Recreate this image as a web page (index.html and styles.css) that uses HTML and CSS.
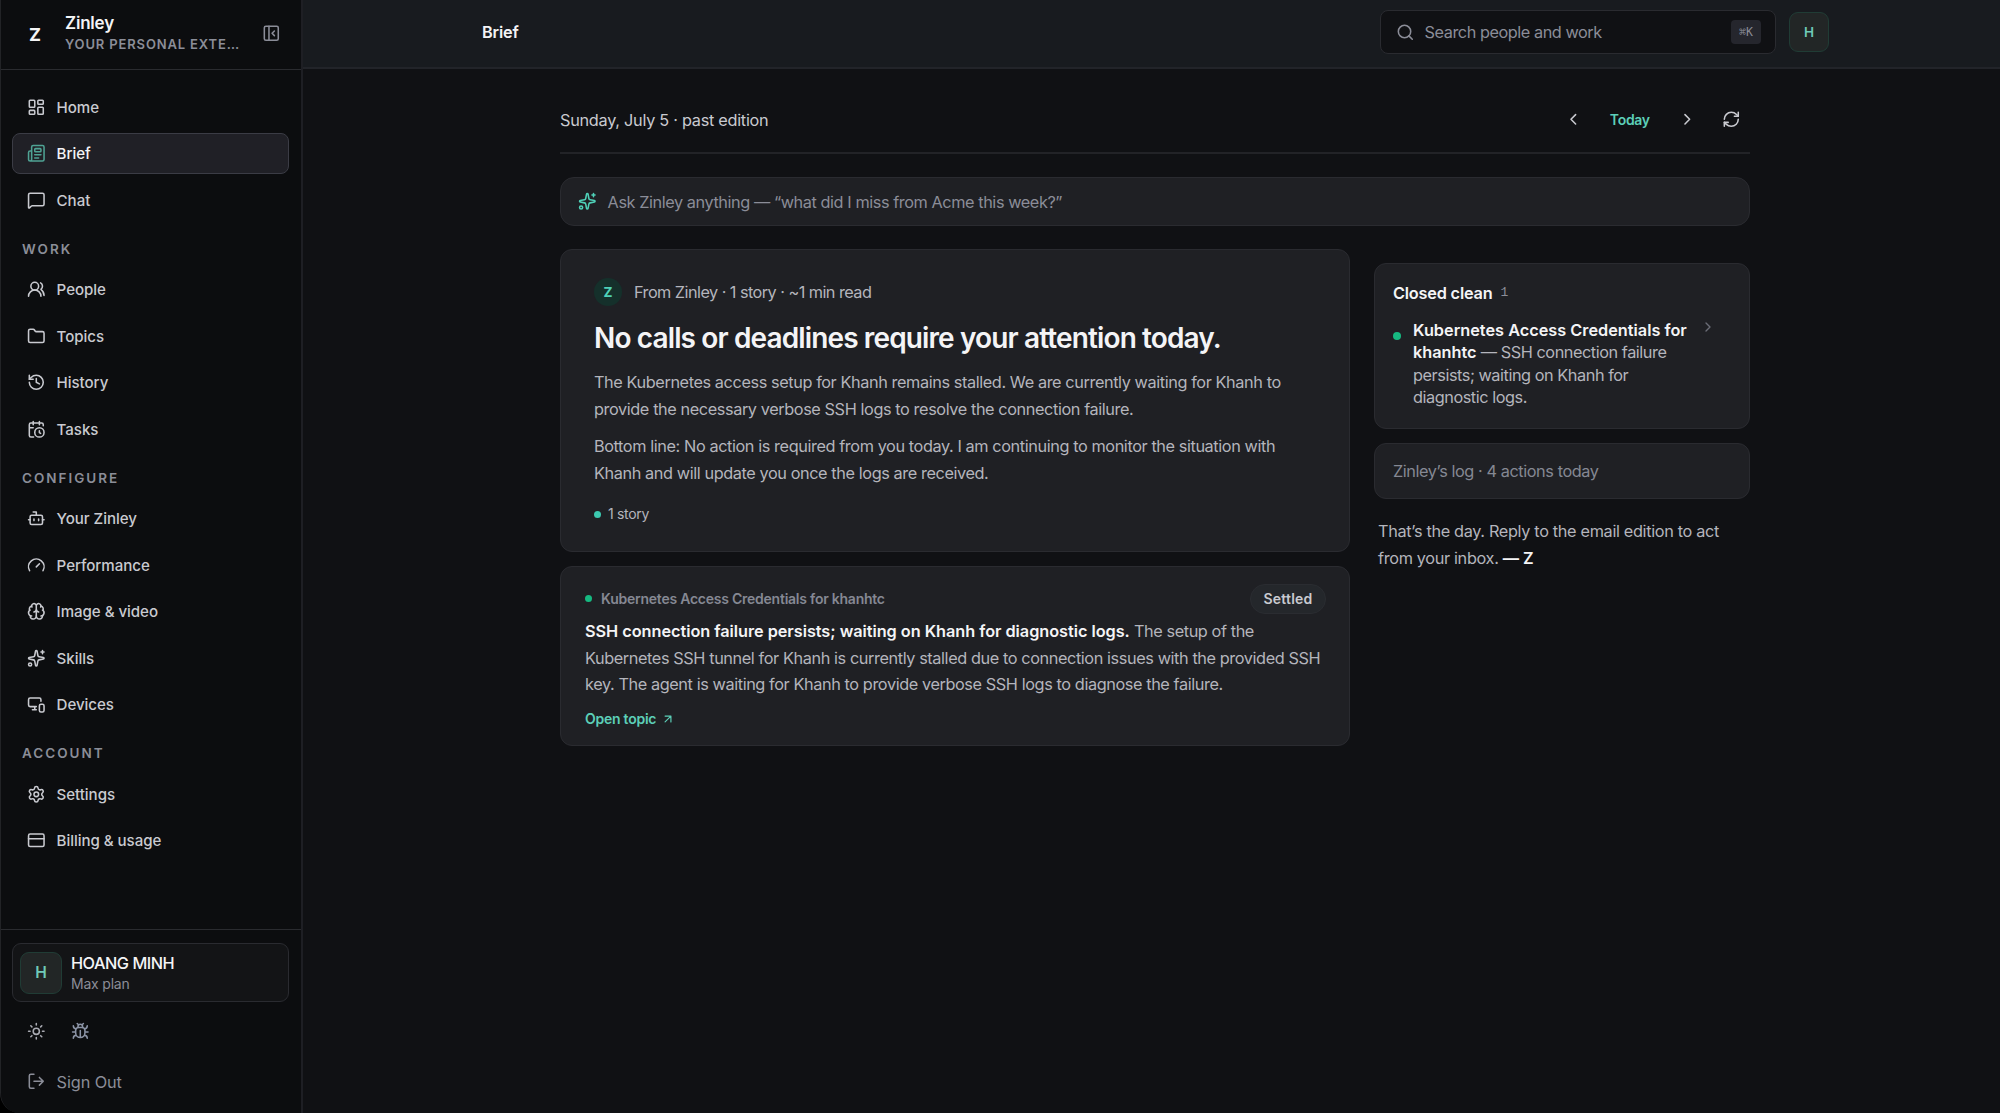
FILE: index.html
```html
<!DOCTYPE html>
<html lang="en">
<head>
  <meta charset="UTF-8">
  <meta name="viewport" content="width=device-width, initial-scale=1.0">
  <title>Brief - Zinley</title>
  <link rel="stylesheet" href="styles.css">
</head>
<body>
  <div class="app">
    <aside class="sidebar">
      <div class="brand">
        <span class="brand-logo">Z</span>
        <div class="brand-text">
          <div class="brand-name"><span>Zinley</span></div>
          <div class="brand-tagline">YOUR PERSONAL EXTE…</div>
        </div>
        <svg class="icon brand-toggle" viewBox="0 0 24 24"><rect x="3" y="3" width="18" height="18" rx="2"/><path d="M9 3v18M16 15l-3-3 3-3"/></svg>
      </div>

      <nav class="nav">
        <a class="nav-item">
          <svg class="icon" viewBox="0 0 24 24"><rect x="3" y="3" width="7" height="9" rx="1"/><rect x="14" y="3" width="7" height="5" rx="1"/><rect x="14" y="12" width="7" height="9" rx="1"/><rect x="3" y="16" width="7" height="5" rx="1"/></svg>
          <span>Home</span>
        </a>
        <a class="nav-item active">
          <svg class="icon" viewBox="0 0 24 24"><path d="M15 18h-5M18 14h-8M4 22h16a2 2 0 0 0 2-2V4a2 2 0 0 0-2-2H8a2 2 0 0 0-2 2v16a2 2 0 0 1-4 0v-9a2 2 0 0 1 2-2h2"/><rect x="10" y="6" width="8" height="4" rx="1"/></svg>
          <span>Brief</span>
        </a>
        <a class="nav-item">
          <svg class="icon" viewBox="0 0 24 24"><path d="M22 17a2 2 0 0 1-2 2H6.828a2 2 0 0 0-1.414.586l-2.202 2.202A.71.71 0 0 1 2 21.286V5a2 2 0 0 1 2-2h16a2 2 0 0 1 2 2z"/></svg>
          <span>Chat</span>
        </a>

        <div class="nav-label">WORK</div>
        <a class="nav-item">
          <svg class="icon" viewBox="0 0 24 24"><path d="M18 21a8 8 0 0 0-16 0"/><circle cx="10" cy="8" r="5"/><path d="M22 20c0-3.37-2-6.5-4-8a5 5 0 0 0-.45-8.3"/></svg>
          <span>People</span>
        </a>
        <a class="nav-item">
          <svg class="icon" viewBox="0 0 24 24"><path d="M20 20a2 2 0 0 0 2-2V8a2 2 0 0 0-2-2h-7.9a2 2 0 0 1-1.69-.9L9.6 3.9A2 2 0 0 0 7.93 3H4a2 2 0 0 0-2 2v13a2 2 0 0 0 2 2Z"/></svg>
          <span>Topics</span>
        </a>
        <a class="nav-item">
          <svg class="icon" viewBox="0 0 24 24"><path d="M3 12a9 9 0 1 0 9-9 9.75 9.75 0 0 0-6.74 2.74L3 8"/><path d="M3 3v5h5M12 7v5l4 2"/></svg>
          <span>History</span>
        </a>
        <a class="nav-item">
          <svg class="icon" viewBox="0 0 24 24"><path d="M16 14v2.2l1.6 1M16 2v4M21 7.5V6a2 2 0 0 0-2-2H5a2 2 0 0 0-2 2v14a2 2 0 0 0 2 2h3.5M3 10h5M8 2v4"/><circle cx="16" cy="16" r="6"/></svg>
          <span>Tasks</span>
        </a>

        <div class="nav-label">CONFIGURE</div>
        <a class="nav-item">
          <svg class="icon" viewBox="0 0 24 24"><path d="M12 8V4H8"/><rect x="4" y="8" width="16" height="12" rx="2"/><path d="M2 14h2M20 14h2M15 13v2M9 13v2"/></svg>
          <span>Your Zinley</span>
        </a>
        <a class="nav-item">
          <svg class="icon" viewBox="0 0 24 24"><path d="m12 14 4-4M3.34 19a10 10 0 1 1 17.32 0"/></svg>
          <span>Performance</span>
        </a>
        <a class="nav-item">
          <svg class="icon" viewBox="0 0 24 24"><path d="M12 18V5M15 13a4.17 4.17 0 0 1-3-4 4.17 4.17 0 0 1-3 4M17.598 6.5A3 3 0 1 0 12 5a3 3 0 1 0-5.598 1.5"/><path d="M17.997 5.125a4 4 0 0 1 2.526 5.77M18 18a4 4 0 0 0 2-7.464"/><path d="M19.967 17.483A4 4 0 1 1 12 18a4 4 0 1 1-7.967-.517M6 18a4 4 0 0 1-2-7.464M6.003 5.125a4 4 0 0 0-2.526 5.77"/></svg>
          <span>Image &amp; video</span>
        </a>
        <a class="nav-item">
          <svg class="icon" viewBox="0 0 24 24"><path d="M11.017 2.814a1 1 0 0 1 1.966 0l1.051 5.558a2 2 0 0 0 1.594 1.594l5.558 1.051a1 1 0 0 1 0 1.966l-5.558 1.051a2 2 0 0 0-1.594 1.594l-1.051 5.558a1 1 0 0 1-1.966 0l-1.051-5.558a2 2 0 0 0-1.594-1.594l-5.558-1.051a1 1 0 0 1 0-1.966l5.558-1.051a2 2 0 0 0 1.594-1.594z"/><path d="M20 2v4M22 4h-4"/><circle cx="4" cy="20" r="2"/></svg>
          <span>Skills</span>
        </a>
        <a class="nav-item">
          <svg class="icon" viewBox="0 0 24 24"><path d="M18 8V6a2 2 0 0 0-2-2H4a2 2 0 0 0-2 2v7a2 2 0 0 0 2 2h8M10 19v-3.96 3.15M7 19h5"/><rect x="16" y="12" width="6" height="10" rx="2"/></svg>
          <span>Devices</span>
        </a>

        <div class="nav-label">ACCOUNT</div>
        <a class="nav-item">
          <svg class="icon" viewBox="0 0 24 24"><path d="M9.671 4.136a2.34 2.34 0 0 1 4.659 0 2.34 2.34 0 0 0 3.319 1.915 2.34 2.34 0 0 1 2.33 4.033 2.34 2.34 0 0 0 0 3.831 2.34 2.34 0 0 1-2.33 4.033 2.34 2.34 0 0 0-3.319 1.915 2.34 2.34 0 0 1-4.659 0 2.34 2.34 0 0 0-3.32-1.915 2.34 2.34 0 0 1-2.33-4.033 2.34 2.34 0 0 0 0-3.831A2.34 2.34 0 0 1 6.35 6.051a2.34 2.34 0 0 0 3.319-1.915"/><circle cx="12" cy="12" r="3"/></svg>
          <span>Settings</span>
        </a>
        <a class="nav-item">
          <svg class="icon" viewBox="0 0 24 24"><rect x="2" y="4" width="20" height="16" rx="2"/><path d="M2 10h20"/></svg>
          <span>Billing &amp; usage</span>
        </a>
      </nav>

      <div class="sidebar-footer">
        <div class="user-card">
          <span class="user-avatar">H</span>
          <div>
            <div class="user-name"><span>HOANG MINH</span></div>
            <div class="user-plan"><span>Max plan</span></div>
          </div>
        </div>
        <div class="tools">
          <svg class="icon" viewBox="0 0 24 24"><circle cx="12" cy="12" r="4"/><path d="M12 2v2M12 20v2M4.93 4.93l1.41 1.41M17.66 17.66l1.41 1.41M2 12h2M20 12h2M6.34 17.66l-1.41 1.41M19.07 4.93l-1.41 1.41"/></svg>
          <svg class="icon bug" viewBox="0 0 24 24"><path d="M12 20v-9M14 7a4 4 0 0 1 4 4v3a6 6 0 0 1-12 0v-3a4 4 0 0 1 4-4zM14.12 3.88 16 2M21 21a4 4 0 0 0-3.81-4M21 5a4 4 0 0 1-3.55 3.97M22 13h-4M3 21a4 4 0 0 1 3.81-4M3 5a4 4 0 0 0 3.55 3.97M6 13H2M8 2l1.88 1.88M9 7.13V6a3 3 0 1 1 6 0v1.13"/></svg>
        </div>
        <a class="sign-out">
          <svg class="icon" viewBox="0 0 24 24"><path d="m16 17 5-5-5-5M21 12H9M9 21H5a2 2 0 0 1-2-2V5a2 2 0 0 1 2-2h4"/></svg>
          <span>Sign Out</span>
        </a>
      </div>
    </aside>

    <main class="main">
      <header class="topbar">
        <div class="page-title"><span>Brief</span></div>
        <div class="search">
          <svg class="icon" viewBox="0 0 24 24"><circle cx="11" cy="11" r="8"/><path d="m21 21-4.34-4.34"/></svg>
          <span class="search-text">Search people and work</span>
          <kbd>⌘K</kbd>
        </div>
        <span class="top-avatar">H</span>
      </header>

      <div class="content">
        <div class="date-row">
          <span class="date">Sunday, July 5 · past edition</span>
          <div class="date-nav">
            <svg class="icon" viewBox="0 0 24 24"><path d="m15 18-6-6 6-6"/></svg>
            <span class="today">Today</span>
            <svg class="icon" viewBox="0 0 24 24"><path d="m9 18 6-6-6-6"/></svg>
            <svg class="icon refresh" viewBox="0 0 24 24"><path d="M3 12a9 9 0 0 1 9-9 9.75 9.75 0 0 1 6.74 2.74L21 8"/><path d="M21 3v5h-5M21 12a9 9 0 0 1-9 9 9.75 9.75 0 0 1-6.74-2.74L3 16"/><path d="M8 16H3v5"/></svg>
          </div>
        </div>

        <div class="ask">
          <svg class="icon" viewBox="0 0 24 24"><path d="M11.017 2.814a1 1 0 0 1 1.966 0l1.051 5.558a2 2 0 0 0 1.594 1.594l5.558 1.051a1 1 0 0 1 0 1.966l-5.558 1.051a2 2 0 0 0-1.594 1.594l-1.051 5.558a1 1 0 0 1-1.966 0l-1.051-5.558a2 2 0 0 0-1.594-1.594l-5.558-1.051a1 1 0 0 1 0-1.966l5.558-1.051a2 2 0 0 0 1.594-1.594z"/><path d="M20 2v4M22 4h-4"/><circle cx="4" cy="20" r="2"/></svg>
          <span>Ask Zinley anything — “what did I miss from Acme this week?”</span>
        </div>

        <div class="columns">
          <div class="col-main">
            <section class="card hero">
              <div class="hero-from">
                <span class="z-badge">Z</span>
                <span class="hero-meta">From Zinley · 1 story · ~1 min read</span>
              </div>
              <h1><span>No calls or deadlines require your attention today.</span></h1>
              <p class="copy">
                <span>The Kubernetes access setup for Khanh remains stalled. We are currently waiting for Khanh to</span><br>
                <span>provide the necessary verbose SSH logs to resolve the connection failure.</span>
              </p>
              <p class="copy">
                <span>Bottom line: No action is required from you today. I am continuing to monitor the situation with</span><br>
                <span>Khanh and will update you once the logs are received.</span>
              </p>
              <div class="hero-count"><i class="dot teal"></i><span>1 story</span></div>
            </section>

            <section class="card story">
              <div class="story-head">
                <i class="dot"></i>
                <span class="story-topic">Kubernetes Access Credentials for khanhtc</span>
                <span class="pill">Settled</span>
              </div>
              <p class="copy">
                <strong>SSH connection failure persists; waiting on Khanh for diagnostic logs.</strong> <span>The setup of the</span><br>
                <span>Kubernetes SSH tunnel for Khanh is currently stalled due to connection issues with the provided SSH</span><br>
                <span>key. The agent is waiting for Khanh to provide verbose SSH logs to diagnose the failure.</span>
              </p>
              <a class="open-topic"><span>Open topic</span>
                <svg class="icon" viewBox="0 0 24 24"><path d="M7 7h10v10M7 17 17 7"/></svg>
              </a>
            </section>
          </div>

          <div class="col-side">
            <section class="card closed">
              <div class="closed-head"><span>Closed clean</span><small>1</small></div>
              <div class="closed-item">
                <i class="dot big"></i>
                <div class="closed-text">
                  <strong>Kubernetes Access Credentials for</strong><br>
                  <strong>khanhtc</strong> <span>— SSH connection failure</span><br>
                  <span>persists; waiting on Khanh for</span><br>
                  <span>diagnostic logs.</span>
                </div>
                <svg class="icon" viewBox="0 0 24 24"><path d="m9 18 6-6-6-6"/></svg>
              </div>
            </section>
            <section class="card log"><span>Zinley’s log · 4 actions today</span></section>
            <p class="copy signoff">
              <span>That’s the day. Reply to the email edition to act</span><br>
              <span>from your inbox.</span> <strong>— Z</strong>
            </p>
          </div>
        </div>
      </div>
    </main>
  </div>
</body>
</html>
```
FILE: styles.css
```css
* {
  box-sizing: border-box;
}

body {
  margin: 0;
  background: #000;
  color: #f4f4f6;
  font-family: Inter, "Liberation Sans", sans-serif;
  font-size: 16.3px;
  white-space: nowrap;
}

.app {
  display: flex;
  height: 1113px;
  overflow: hidden;
  background: #101114;
  border-left: 1px solid #222326;
  border-bottom-left-radius: 20px;
}

.icon {
  width: 18.6px;
  height: 18.6px;
  flex: none;
  fill: none;
  stroke: currentColor;
  stroke-width: 2;
  stroke-linecap: round;
  stroke-linejoin: round;
}

/* sidebar */
.sidebar {
  width: 302px;
  flex: none;
  display: flex;
  flex-direction: column;
  background: #0c0d0f;
  border-right: 2px solid #1e1f24;
}

.brand {
  height: 70px;
  padding: 0 20px 0 28px;
  display: flex;
  align-items: center;
  border-bottom: 1px solid #2a2b2f;
}

.brand-logo {
  width: 36px;
  font-size: 18px;
  font-weight: 700;
}

.brand-text {
  width: 177px;
  margin-top: -3px;
}

.brand-name {
  font-size: 17px;
  line-height: 21px;
  font-weight: 600;
  letter-spacing: -0.2px;
}

.brand-tagline {
  font-size: 13px;
  line-height: 20px;
  font-weight: 600;
  letter-spacing: 0.85px;
  color: #8b8d98;
}

.brand-toggle {
  margin-left: 20px;
  margin-top: -3px;
  color: #8b8d98;
}

.nav {
  flex: 1;
  padding: 16px 12px 0 11px;
  display: flex;
  flex-direction: column;
  gap: 5px;
}

.nav-item {
  height: 41.5px;
  flex: none;
  padding: 1px 14px 0;
  display: flex;
  align-items: center;
  gap: 11px;
  border: 1px solid transparent;
  border-radius: 8px;
  font-size: 15.1px;
  font-weight: 500;
  letter-spacing: -0.05px;
  color: #c9cad0;
}

.nav-item.active {
  background: #202026;
  border-color: #3b3c45;
  color: #f4f4f6;
}

.nav-item.active .icon {
  color: #4fa394;
}

.nav-label {
  height: 38px;
  padding: 15px 10px 0;
  line-height: 16px;
  font-size: 13.5px;
  font-weight: 600;
  letter-spacing: 2px;
  color: #8b8d98;
}

.sidebar-footer {
  height: 184px;
  padding: 13px 12px 0 11px;
  border-top: 1px solid #2a2b2f;
}

.user-card {
  height: 59px;
  padding: 0 7px;
  display: flex;
  align-items: center;
  gap: 9px;
  background: #131416;
  border: 1px solid #2a2b30;
  border-radius: 9px;
}

.user-avatar,
.top-avatar {
  display: flex;
  align-items: center;
  justify-content: center;
  background: #222626;
  border: 1px solid #203c35;
  border-radius: 9px;
  font-weight: 600;
  color: #6fcab8;
}

.user-avatar {
  width: 42px;
  height: 42px;
  font-size: 15.5px;
}

.user-name {
  padding-top: 1px;
  line-height: 21px;
  font-weight: 500;
  letter-spacing: -0.5px;
}

.user-plan {
  line-height: 20px;
  font-size: 14px;
  letter-spacing: -0.2px;
  color: #8b8d98;
}

.tools {
  padding: 20px 15px 0;
  display: flex;
  gap: 25px;
  color: #a9aab2;
}

.tools .bug {
  color: #8b93a5;
}

.sign-out {
  padding: 31px 15px 0;
  display: flex;
  align-items: center;
  gap: 11px;
  letter-spacing: -0.1px;
  color: #8b8d98;
}

/* top bar */
.main {
  flex: 1;
}

.topbar {
  height: 69px;
  padding: 0 171px 3px 179px;
  display: flex;
  align-items: center;
  background: #181b1f;
  border-bottom: 2px solid #222429;
}

.page-title {
  flex: 1;
  font-weight: 600;
  letter-spacing: -0.2px;
}

.search {
  width: 396px;
  height: 44px;
  padding: 0 14px 0 15px;
  display: flex;
  align-items: center;
  gap: 10px;
  background: #101114;
  border: 1px solid #2a2b30;
  border-radius: 8px;
  color: #8b8d98;
}

.search-text {
  flex: 1;
  letter-spacing: -0.46px;
}

kbd {
  width: 30px;
  height: 24px;
  line-height: 24px;
  text-align: center;
  background: #25262d;
  border-radius: 4px;
  font-family: "DejaVu Sans Mono", monospace;
  font-size: 11.5px;
}

.top-avatar {
  width: 40px;
  height: 40px;
  margin-left: 13px;
  font-size: 13.5px;
}

/* page content */
.content {
  width: 1190px;
  margin-left: 257px;
}

.date-row {
  height: 85px;
  padding: 18px 9px 0 0;
  display: flex;
  align-items: center;
  justify-content: space-between;
  border-bottom: 2px solid #222327;
  color: #c9cad0;
}

.date {
  letter-spacing: -0.28px;
}

.date-nav {
  display: flex;
  align-items: center;
}

.today {
  margin: 0 28px 0 27px;
  font-size: 14px;
  font-weight: 600;
  letter-spacing: -0.3px;
  color: #5ccfb8;
}

.refresh {
  margin-left: 26px;
}

.ask {
  height: 49px;
  margin-top: 23px;
  padding: 0 17px;
  display: flex;
  align-items: center;
  gap: 11px;
  background: #1f2024;
  border: 1px solid #2a2b30;
  border-radius: 14px;
  letter-spacing: -0.43px;
  color: #8b8d98;
}

.ask .icon {
  color: #4fd1b8;
}

.columns {
  margin-top: 23px;
  display: flex;
  gap: 24px;
}

.col-main {
  width: 790px;
}

.col-side {
  flex: 1;
  padding-top: 14px;
}

.card {
  background: #1f2024;
  border: 1px solid #2a2b30;
  border-radius: 12px;
}

.dot {
  width: 7px;
  height: 7px;
  flex: none;
  border-radius: 50%;
  background: #16b981;
}

.dot.teal {
  background: #3cc9b0;
}

.dot.big {
  width: 8px;
  height: 8px;
  margin: 13px 12px 0 0;
}

.copy {
  margin: 0;
  line-height: 26.6px;
  letter-spacing: -0.41px;
  color: #b4b5bc;
}

.copy strong {
  font-weight: 600;
  letter-spacing: -0.04px;
  color: #f4f4f6;
}

.hero {
  height: 303px;
  padding: 28px 33px;
}

.hero-from {
  display: flex;
  align-items: center;
  gap: 12px;
  color: #b4b5bc;
}

.hero-meta {
  letter-spacing: -0.55px;
}

.z-badge {
  width: 28px;
  height: 28px;
  line-height: 28px;
  text-align: center;
  background: #15302b;
  border-radius: 50%;
  font-size: 13.5px;
  font-weight: 700;
  color: #4fd1b8;
}

h1 {
  margin: 14px 0 13px;
  line-height: 36px;
  font-size: 28px;
  font-weight: 600;
  letter-spacing: -0.87px;
}

.hero .copy + .copy {
  margin-top: 11px;
}

.hero-count {
  margin-top: 18px;
  display: flex;
  align-items: center;
  gap: 7px;
  line-height: 20px;
  font-size: 14px;
  letter-spacing: -0.3px;
  color: #b4b5bc;
}

.story {
  height: 180px;
  margin-top: 14px;
  padding: 16px 23px 16px 24px;
}

.story-head {
  height: 31px;
  display: flex;
  align-items: center;
  gap: 9px;
}

.story-topic {
  flex: 1;
  font-size: 14px;
  font-weight: 600;
  letter-spacing: -0.24px;
  color: #858893;
}

.pill {
  width: 76px;
  height: 30px;
  line-height: 28px;
  text-align: center;
  background: #24272b;
  border: 1px solid #2a2c31;
  border-radius: 15px;
  font-size: 14px;
  font-weight: 600;
  letter-spacing: 0.2px;
  color: #c9cad0;
}

.story .copy {
  margin-top: 4px;
}

.open-topic {
  margin-top: 11px;
  display: flex;
  align-items: center;
  gap: 5px;
  line-height: 20px;
  font-size: 14px;
  font-weight: 600;
  letter-spacing: -0.25px;
  color: #5ccfb8;
}

.open-topic .icon {
  width: 14px;
  height: 14px;
}

.closed {
  height: 166px;
  padding: 16px 18px;
}

.closed-head {
  display: flex;
  align-items: center;
  gap: 8px;
  line-height: 24px;
  font-weight: 600;
  letter-spacing: -0.2px;
}

.closed-head small {
  padding-top: 1px;
  font-family: "Liberation Mono", monospace;
  font-size: 13px;
  font-weight: 400;
  color: #8b8d98;
}

.closed-item {
  margin-top: 14px;
  display: flex;
  align-items: flex-start;
}

.closed-text {
  width: 287px;
  line-height: 22.4px;
  letter-spacing: -0.45px;
  color: #b4b5bc;
}

.closed-text strong {
  font-weight: 600;
  letter-spacing: 0;
  color: #f4f4f6;
}

.closed-item .icon {
  width: 16px;
  height: 16px;
  color: #6b6d77;
}

.log {
  height: 56px;
  margin-top: 14px;
  padding: 0 18px;
  line-height: 55px;
  letter-spacing: -0.42px;
  color: #858893;
}

.signoff {
  margin: 19px 0 0 4px;
  letter-spacing: -0.34px;
}
```
